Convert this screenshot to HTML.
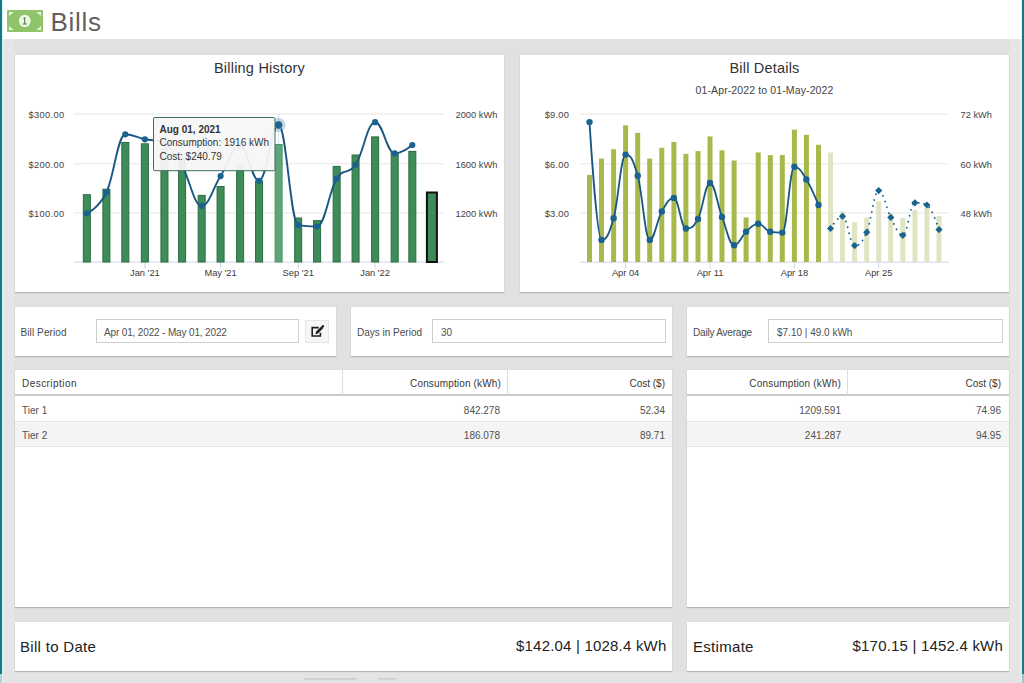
<!DOCTYPE html>
<html><head><meta charset="utf-8">
<style>
*{margin:0;padding:0;box-sizing:border-box}
html,body{width:1024px;height:683px;overflow:hidden}
body{background:#e1e1e1;position:relative;font-family:"Liberation Sans",sans-serif;color:#333}
.abs{position:absolute}
.stripe{position:absolute;top:0;height:674px;width:2px;background:#17788a}
.header{position:absolute;left:3px;top:0;width:1018px;height:39px;background:#fff}
.card{position:absolute;background:#fff;box-shadow:0 1px 1px rgba(0,0,0,0.2),0 0 1px rgba(0,0,0,0.05)}
.t{position:absolute;white-space:nowrap;line-height:1}
.inp{position:absolute;border:1px solid #cfcfcf;background:#fff;height:24px}
.lbl{font-size:10px;color:#4a4a4a}
.th{font-size:10px;color:#383838}
.td{font-size:10px;color:#505050}
svg text{font-family:"Liberation Sans",sans-serif}
</style></head><body>
<div class="abs" style="left:0;top:674px;width:2px;height:9px;background:#b5d3d6"></div>
<div class="abs" style="right:0;top:674px;width:2px;height:9px;background:#9cc6cc"></div>
<div class="stripe" style="left:0"></div>
<div class="stripe" style="right:0"></div>
<div class="abs" style="left:3px;top:39px;width:11px;height:644px;background:#e5e6e5"></div>
<div class="abs" style="left:1010px;top:39px;width:11px;height:644px;background:#e5e6e5"></div>
<div class="abs" style="left:2px;top:0;width:1px;height:683px;background:#dff3f3"></div>
<div class="abs" style="left:1021px;top:0;width:1px;height:683px;background:#dff3f3"></div>
<div class="header"></div>
<!-- icon -->
<svg class="abs" style="left:7px;top:10px" width="36" height="22" viewBox="0 0 36 22">
<rect x="0" y="0" width="36" height="22" rx="1" fill="#8fc46a"/>
<path d="M2 2h5l-5 4z M34 2h-5l5 4z M2 20h5l-5-4z M34 20h-5l5-4z" fill="#e4f5d4"/>
<ellipse cx="17.8" cy="11" rx="5.8" ry="6.2" fill="#eef9e6"/>
<path d="M16.3 8.2l2-1.4v6.8h1.6v1h-4.4v-1h1.6V8.8l-0.8 0.5z" fill="#5a7a4c"/>
</svg>
<div class="t" style="left:50.5px;top:8.5px;font-size:26px;letter-spacing:0.7px;color:#606060">Bills</div>

<div class="abs" style="left:3px;top:671px;width:1018px;height:12px;background:#e4e4e4"></div>
<div class="abs" style="left:304px;top:678px;width:53px;height:2px;border-radius:1px;background:#d0d0d0"></div>
<div class="abs" style="left:378px;top:678px;width:19px;height:2px;border-radius:1px;background:#d3d3d3"></div>
<!-- chart cards -->
<div class="card" style="left:14.5px;top:54.8px;width:489.5px;height:237.2px"></div>
<div class="card" style="left:519.8px;top:54.8px;width:489.5px;height:237.2px"></div>

<!-- row 2 -->
<div class="card" style="left:14.5px;top:307px;width:321.5px;height:49px"></div>
<div class="card" style="left:351px;top:307px;width:321px;height:49px"></div>
<div class="card" style="left:687px;top:307px;width:321.5px;height:49px"></div>

<!-- row 3 -->
<div class="card" style="left:14.5px;top:370px;width:657.5px;height:237px"></div>
<div class="card" style="left:687px;top:370px;width:321.5px;height:237px"></div>

<!-- row 4 -->
<div class="card" style="left:14.5px;top:622px;width:657.5px;height:48.5px"></div>
<div class="card" style="left:687px;top:622px;width:321.5px;height:48.5px"></div>

<svg class="abs" style="left:0;top:0" width="1024" height="683" viewBox="0 0 1024 683">
<line x1="74" y1="114" x2="444" y2="114" stroke="#e6e6e6" stroke-width="1"/>
<line x1="580" y1="114" x2="949" y2="114" stroke="#e6e6e6" stroke-width="1"/>
<line x1="74" y1="163.8" x2="444" y2="163.8" stroke="#e6e6e6" stroke-width="1"/>
<line x1="580" y1="163.8" x2="949" y2="163.8" stroke="#e6e6e6" stroke-width="1"/>
<line x1="74" y1="212.9" x2="444" y2="212.9" stroke="#e6e6e6" stroke-width="1"/>
<line x1="580" y1="212.9" x2="949" y2="212.9" stroke="#e6e6e6" stroke-width="1"/>
<line x1="74" y1="262" x2="444" y2="262" stroke="#ccd6eb" stroke-width="1"/>
<line x1="580" y1="262.2" x2="949" y2="262.2" stroke="#ccd6eb" stroke-width="1"/>
<line x1="144.9" y1="263" x2="144.9" y2="268.5" stroke="#ccd6eb" stroke-width="1"/>
<line x1="220.6" y1="263" x2="220.6" y2="268.5" stroke="#ccd6eb" stroke-width="1"/>
<line x1="298.2" y1="263" x2="298.2" y2="268.5" stroke="#ccd6eb" stroke-width="1"/>
<line x1="375.1" y1="263" x2="375.1" y2="268.5" stroke="#ccd6eb" stroke-width="1"/>
<line x1="625.6" y1="263" x2="625.6" y2="268.5" stroke="#ccd6eb" stroke-width="1"/>
<line x1="710.0" y1="263" x2="710.0" y2="268.5" stroke="#ccd6eb" stroke-width="1"/>
<line x1="794.4" y1="263" x2="794.4" y2="268.5" stroke="#ccd6eb" stroke-width="1"/>
<line x1="878.7" y1="263" x2="878.7" y2="268.5" stroke="#ccd6eb" stroke-width="1"/>
<line x1="278.6" y1="114" x2="278.6" y2="262" stroke="#ccd6eb" stroke-width="1" opacity="0.7"/>
<rect x="83.35" y="194.7" width="7.0" height="67.3" fill="#3e8d58" stroke="#2c6a43" stroke-width="1"/>
<rect x="102.90" y="189.2" width="7.0" height="72.8" fill="#3e8d58" stroke="#2c6a43" stroke-width="1"/>
<rect x="121.83" y="142.5" width="7.0" height="119.5" fill="#3e8d58" stroke="#2c6a43" stroke-width="1"/>
<rect x="141.38" y="143.8" width="7.0" height="118.2" fill="#3e8d58" stroke="#2c6a43" stroke-width="1"/>
<rect x="160.94" y="148.5" width="7.0" height="113.5" fill="#3e8d58" stroke="#2c6a43" stroke-width="1"/>
<rect x="178.60" y="158.5" width="7.0" height="103.5" fill="#3e8d58" stroke="#2c6a43" stroke-width="1"/>
<rect x="198.16" y="195.4" width="7.0" height="66.6" fill="#3e8d58" stroke="#2c6a43" stroke-width="1"/>
<rect x="217.08" y="186.5" width="7.0" height="75.5" fill="#3e8d58" stroke="#2c6a43" stroke-width="1"/>
<rect x="236.63" y="164.5" width="7.0" height="97.5" fill="#3e8d58" stroke="#2c6a43" stroke-width="1"/>
<rect x="255.56" y="180.9" width="7.0" height="81.1" fill="#3e8d58" stroke="#2c6a43" stroke-width="1"/>
<rect x="275.11" y="144.5" width="7.0" height="117.5" fill="#5ea577" stroke="#4a9465" stroke-width="1"/>
<rect x="294.67" y="218.0" width="7.0" height="44.0" fill="#3e8d58" stroke="#2c6a43" stroke-width="1"/>
<rect x="313.59" y="220.6" width="7.0" height="41.4" fill="#3e8d58" stroke="#2c6a43" stroke-width="1"/>
<rect x="333.15" y="166.4" width="7.0" height="95.6" fill="#3e8d58" stroke="#2c6a43" stroke-width="1"/>
<rect x="352.07" y="155.0" width="7.0" height="107.0" fill="#3e8d58" stroke="#2c6a43" stroke-width="1"/>
<rect x="371.63" y="136.9" width="7.0" height="125.1" fill="#3e8d58" stroke="#2c6a43" stroke-width="1"/>
<rect x="391.18" y="152.5" width="7.0" height="109.5" fill="#3e8d58" stroke="#2c6a43" stroke-width="1"/>
<rect x="408.84" y="151.4" width="7.0" height="110.6" fill="#3e8d58" stroke="#2c6a43" stroke-width="1"/>
<rect x="426.90" y="192.5" width="10.0" height="69.5" fill="#3e8a58" stroke="#111" stroke-width="2"/>
<path d="M86.85 213.30 C86.85 213.30 98.58 208.56 106.40 192.50 C113.97 176.96 117.76 134.30 125.33 134.30 C133.15 134.30 137.06 137.56 144.88 139.30 C152.71 141.04 156.62 139.30 164.44 143.00 C171.50 146.70 175.04 154.08 182.10 166.00 C189.92 179.20 193.83 205.80 201.66 205.80 C209.23 205.80 213.01 187.86 220.58 176.10 C228.40 163.94 232.31 146.00 240.13 146.00 C247.70 146.00 251.49 180.80 259.06 180.80 C266.88 180.80 270.79 125.00 278.61 125.00 C286.44 125.00 290.35 223.70 298.17 225.10 C305.74 226.50 309.52 226.50 317.09 226.50 C324.91 226.50 328.82 191.24 336.65 178.70 C344.22 166.56 348.00 175.91 355.57 164.80 C363.39 153.31 367.30 122.20 375.13 122.20 C382.95 122.20 386.86 153.40 394.68 153.40 C401.75 153.40 412.34 145.00 412.34 145.00" fill="none" stroke="#1a5783" stroke-width="1.9"/>
<circle cx="86.8" cy="213.3" r="3.1" fill="#1b6290"/>
<circle cx="106.4" cy="192.5" r="3.1" fill="#1b6290"/>
<circle cx="125.3" cy="134.3" r="3.1" fill="#1b6290"/>
<circle cx="144.9" cy="139.3" r="3.1" fill="#1b6290"/>
<circle cx="164.4" cy="143.0" r="3.1" fill="#1b6290"/>
<circle cx="182.1" cy="166.0" r="3.1" fill="#1b6290"/>
<circle cx="201.7" cy="205.8" r="3.1" fill="#1b6290"/>
<circle cx="220.6" cy="176.1" r="3.1" fill="#1b6290"/>
<circle cx="240.1" cy="146.0" r="3.1" fill="#1b6290"/>
<circle cx="259.1" cy="180.8" r="3.1" fill="#1b6290"/>
<circle cx="278.6" cy="125.0" r="7" fill="#1b6290" fill-opacity="0.25"/>
<circle cx="278.6" cy="125.0" r="4.2" fill="#1b6290" stroke="#fff" stroke-width="0.5"/>
<circle cx="298.2" cy="225.1" r="3.1" fill="#1b6290"/>
<circle cx="317.1" cy="226.5" r="3.1" fill="#1b6290"/>
<circle cx="336.6" cy="178.7" r="3.1" fill="#1b6290"/>
<circle cx="355.6" cy="164.8" r="3.1" fill="#1b6290"/>
<circle cx="375.1" cy="122.2" r="3.1" fill="#1b6290"/>
<circle cx="394.7" cy="153.4" r="3.1" fill="#1b6290"/>
<circle cx="412.3" cy="145.0" r="3.1" fill="#1b6290"/>
<rect x="587.0" y="174.9" width="5" height="87.1" fill="#a9b84a"/>
<rect x="599.0" y="158.6" width="5" height="103.4" fill="#a9b84a"/>
<rect x="611.1" y="149.2" width="5" height="112.8" fill="#a9b84a"/>
<rect x="623.1" y="125.3" width="5" height="136.7" fill="#a9b84a"/>
<rect x="635.2" y="132.9" width="5" height="129.1" fill="#a9b84a"/>
<rect x="647.2" y="158.6" width="5" height="103.4" fill="#a9b84a"/>
<rect x="659.3" y="147.8" width="5" height="114.2" fill="#a9b84a"/>
<rect x="671.4" y="141.9" width="5" height="120.1" fill="#a9b84a"/>
<rect x="683.4" y="153.8" width="5" height="108.2" fill="#a9b84a"/>
<rect x="695.5" y="151.1" width="5" height="110.9" fill="#a9b84a"/>
<rect x="707.5" y="136.4" width="5" height="125.6" fill="#a9b84a"/>
<rect x="719.5" y="150.3" width="5" height="111.7" fill="#a9b84a"/>
<rect x="731.6" y="160.5" width="5" height="101.5" fill="#a9b84a"/>
<rect x="743.6" y="217.4" width="5" height="44.6" fill="#a9b84a"/>
<rect x="755.7" y="152.4" width="5" height="109.6" fill="#a9b84a"/>
<rect x="767.8" y="155.1" width="5" height="106.9" fill="#a9b84a"/>
<rect x="779.8" y="155.1" width="5" height="106.9" fill="#a9b84a"/>
<rect x="791.9" y="129.7" width="5" height="132.3" fill="#a9b84a"/>
<rect x="803.9" y="134.8" width="5" height="127.2" fill="#a9b84a"/>
<rect x="816.0" y="144.8" width="5" height="117.2" fill="#a9b84a"/>
<rect x="828.0" y="152.4" width="5" height="109.6" fill="#dfe4c3"/>
<rect x="840.0" y="211.5" width="5" height="50.5" fill="#dfe4c3"/>
<rect x="852.1" y="222.3" width="5" height="39.7" fill="#dfe4c3"/>
<rect x="864.2" y="217.4" width="5" height="44.6" fill="#dfe4c3"/>
<rect x="876.2" y="201.2" width="5" height="60.8" fill="#dfe4c3"/>
<rect x="888.2" y="212.8" width="5" height="49.2" fill="#dfe4c3"/>
<rect x="900.3" y="218.2" width="5" height="43.8" fill="#dfe4c3"/>
<rect x="912.4" y="210.1" width="5" height="51.9" fill="#dfe4c3"/>
<rect x="924.4" y="207.9" width="5" height="54.1" fill="#dfe4c3"/>
<rect x="936.5" y="216.1" width="5" height="45.9" fill="#dfe4c3"/>
<path d="M589.50 122.10 C589.50 122.10 596.73 239.90 601.55 239.90 C606.37 239.90 608.78 235.26 613.60 218.20 C618.42 201.14 620.83 154.60 625.65 154.60 C630.47 154.60 632.88 158.64 637.70 175.70 C642.52 192.76 644.93 239.90 649.75 239.90 C654.57 239.90 656.98 219.90 661.80 211.50 C666.62 203.10 669.03 197.90 673.85 197.90 C678.67 197.90 681.08 228.50 685.90 228.50 C690.72 228.50 693.13 228.10 697.95 219.00 C702.77 209.90 705.18 183.00 710.00 183.00 C714.82 183.00 717.23 204.44 722.05 216.90 C726.87 229.36 729.28 245.30 734.10 245.30 C738.92 245.30 741.33 236.12 746.15 231.80 C750.97 227.48 753.38 223.70 758.20 223.70 C763.02 223.70 765.43 231.00 770.25 231.80 C775.07 232.60 777.48 232.60 782.30 232.60 C787.12 232.60 789.53 166.80 794.35 166.80 C799.17 166.80 801.58 171.86 806.40 179.50 C811.22 187.14 818.45 205.00 818.45 205.00" fill="none" stroke="#1a5783" stroke-width="1.8"/>
<circle cx="589.5" cy="122.1" r="3.2" fill="#1b6290"/>
<circle cx="601.5" cy="239.9" r="3.2" fill="#1b6290"/>
<circle cx="613.6" cy="218.2" r="3.2" fill="#1b6290"/>
<circle cx="625.6" cy="154.6" r="3.2" fill="#1b6290"/>
<circle cx="637.7" cy="175.7" r="3.2" fill="#1b6290"/>
<circle cx="649.8" cy="239.9" r="3.2" fill="#1b6290"/>
<circle cx="661.8" cy="211.5" r="3.2" fill="#1b6290"/>
<circle cx="673.9" cy="197.9" r="3.2" fill="#1b6290"/>
<circle cx="685.9" cy="228.5" r="3.2" fill="#1b6290"/>
<circle cx="698.0" cy="219.0" r="3.2" fill="#1b6290"/>
<circle cx="710.0" cy="183.0" r="3.2" fill="#1b6290"/>
<circle cx="722.0" cy="216.9" r="3.2" fill="#1b6290"/>
<circle cx="734.1" cy="245.3" r="3.2" fill="#1b6290"/>
<circle cx="746.1" cy="231.8" r="3.2" fill="#1b6290"/>
<circle cx="758.2" cy="223.7" r="3.2" fill="#1b6290"/>
<circle cx="770.2" cy="231.8" r="3.2" fill="#1b6290"/>
<circle cx="782.3" cy="232.6" r="3.2" fill="#1b6290"/>
<circle cx="794.4" cy="166.8" r="3.2" fill="#1b6290"/>
<circle cx="806.4" cy="179.5" r="3.2" fill="#1b6290"/>
<circle cx="818.5" cy="205.0" r="3.2" fill="#1b6290"/>
<path d="M830.50 228.50 C830.50 228.50 837.73 216.30 842.55 216.30 C847.37 216.30 849.78 245.60 854.60 245.60 C859.42 245.60 861.83 243.30 866.65 232.30 C871.47 221.30 873.88 190.60 878.70 190.60 C883.52 190.60 885.93 208.46 890.75 217.40 C895.57 226.34 897.98 235.30 902.80 235.30 C907.62 235.30 910.03 202.80 914.85 202.80 C919.67 202.80 922.08 202.80 926.90 205.00 C931.72 207.20 938.95 229.60 938.95 229.60" fill="none" stroke="#1b6290" stroke-width="1.9" stroke-dasharray="0.01 6" stroke-linecap="round"/>
<path d="M830.5 224.9l3.6 3.6l-3.6 3.6l-3.6 -3.6z" fill="#1b6290"/>
<path d="M842.5 212.7l3.6 3.6l-3.6 3.6l-3.6 -3.6z" fill="#1b6290"/>
<path d="M854.6 242.0l3.6 3.6l-3.6 3.6l-3.6 -3.6z" fill="#1b6290"/>
<path d="M866.7 228.7l3.6 3.6l-3.6 3.6l-3.6 -3.6z" fill="#1b6290"/>
<path d="M878.7 187.0l3.6 3.6l-3.6 3.6l-3.6 -3.6z" fill="#1b6290"/>
<path d="M890.8 213.8l3.6 3.6l-3.6 3.6l-3.6 -3.6z" fill="#1b6290"/>
<path d="M902.8 231.7l3.6 3.6l-3.6 3.6l-3.6 -3.6z" fill="#1b6290"/>
<path d="M914.9 199.2l3.6 3.6l-3.6 3.6l-3.6 -3.6z" fill="#1b6290"/>
<path d="M926.9 201.4l3.6 3.6l-3.6 3.6l-3.6 -3.6z" fill="#1b6290"/>
<path d="M939.0 226.0l3.6 3.6l-3.6 3.6l-3.6 -3.6z" fill="#1b6290"/>
<!-- titles -->
<text x="259.5" y="72.6" font-size="14.5" fill="#333" text-anchor="middle" letter-spacing="0.22">Billing History</text>
<text x="764.5" y="72.6" font-size="14.5" fill="#333" text-anchor="middle" letter-spacing="0.2">Bill Details</text>
<text x="764.5" y="93.8" font-size="10.5" fill="#444" text-anchor="middle" letter-spacing="0.12">01-Apr-2022 to 01-May-2022</text>
<!-- BH axis labels -->
<g font-size="9.3" fill="#444" text-anchor="end">
<text x="64.5" y="118" letter-spacing="0.35">$300.00</text>
<text x="64.5" y="167.5" letter-spacing="0.35">$200.00</text>
<text x="64.5" y="216.5" letter-spacing="0.35">$100.00</text>
<text x="569" y="118" letter-spacing="0.2">$9.00</text>
<text x="569" y="167.5" letter-spacing="0.2">$6.00</text>
<text x="569" y="216.5" letter-spacing="0.2">$3.00</text>
</g>
<g font-size="9.3" fill="#444" text-anchor="start">
<text x="455.5" y="118">2000 kWh</text>
<text x="455.5" y="167.5">1600 kWh</text>
<text x="455.5" y="216.5">1200 kWh</text>
<text x="960.5" y="118">72 kWh</text>
<text x="960.5" y="167.5">60 kWh</text>
<text x="960.5" y="216.5">48 kWh</text>
</g>
<g font-size="9.3" fill="#3a3a3a" text-anchor="middle">
<text x="144.9" y="275.8">Jan '21</text>
<text x="220.6" y="275.8">May '21</text>
<text x="298.2" y="275.8">Sep '21</text>
<text x="375.1" y="275.8">Jan '22</text>
<text x="625.6" y="275.8">Apr 04</text>
<text x="710.0" y="275.8">Apr 11</text>
<text x="794.4" y="275.8">Apr 18</text>
<text x="878.7" y="275.8">Apr 25</text>
</g>
<!-- tooltip -->
<rect x="153.5" y="117.5" width="121.5" height="53.2" rx="1.5" fill="#f7f7f7" fill-opacity="0.95" stroke="#3e6e62" stroke-width="1"/>
<g font-size="10" fill="#333">
<text x="159.5" y="133.4" font-weight="bold">Aug 01, 2021</text>
<text x="159.5" y="146.4">Consumption: 1916 kWh</text>
<text x="159.5" y="159.8">Cost: $240.79</text>
</g>
</svg>

<!-- row2 content -->
<div class="t lbl" style="left:20.5px;top:328px;letter-spacing:0.1px">Bill Period</div>
<div class="inp" style="left:96px;top:319px;width:203px"></div>
<div class="t td" style="left:104px;top:328px;letter-spacing:-0.15px">Apr 01, 2022 - May 01, 2022</div>
<div class="abs" style="left:305px;top:319.5px;width:24px;height:23.5px;background:#f6f6f6;border:1px solid #e6e6e6"></div>
<svg class="abs" style="left:311px;top:325px" width="14" height="13" viewBox="0 0 14 13">
<path d="M7.8 2.6H1.2V11h8.2V7.7" fill="none" stroke="#1e1e1e" stroke-width="1.6"/>
<path d="M4.3 9.2l0.9-2.6 5.6-5.6 1.8 1.8-5.6 5.6z" fill="#1e1e1e"/>
<circle cx="12" cy="1.2" r="1.1" fill="#1e1e1e"/>
</svg>
<div class="t lbl" style="left:357px;top:328px">Days in Period</div>
<div class="inp" style="left:432px;top:319px;width:234px"></div>
<div class="t td" style="left:441px;top:328px">30</div>
<div class="t lbl" style="left:693px;top:328px;letter-spacing:-0.2px">Daily Average</div>
<div class="inp" style="left:768px;top:319px;width:235px"></div>
<div class="t td" style="left:777px;top:328px">$7.10 | 49.0 kWh</div>

<!-- table left -->
<div class="abs" style="left:15px;top:394px;width:657px;height:2px;background:#c9c9c9"></div>
<div class="abs" style="left:342px;top:370px;width:1px;height:25px;background:#dcdcdc"></div>
<div class="abs" style="left:507px;top:370px;width:1px;height:25px;background:#dcdcdc"></div>
<div class="abs" style="left:15px;top:421px;width:657px;height:1px;background:#e6e6e6"></div>
<div class="abs" style="left:15px;top:422px;width:657px;height:24px;background:#f4f4f4"></div>
<div class="abs" style="left:15px;top:446px;width:657px;height:1px;background:#e6e6e6"></div>
<div class="t th" style="left:22px;top:379px;letter-spacing:0.45px">Description</div>
<div class="t th" style="right:523px;top:379px;letter-spacing:0.15px">Consumption (kWh)</div>
<div class="t th" style="right:359px;top:379px">Cost ($)</div>
<div class="t td" style="left:22px;top:405.5px">Tier 1</div>
<div class="t td" style="right:524px;top:405.5px">842.278</div>
<div class="t td" style="right:359px;top:405.5px">52.34</div>
<div class="t td" style="left:22px;top:430.5px">Tier 2</div>
<div class="t td" style="right:524px;top:430.5px">186.078</div>
<div class="t td" style="right:359px;top:430.5px">89.71</div>

<!-- table right -->
<div class="abs" style="left:687px;top:394px;width:321.5px;height:2px;background:#c9c9c9"></div>
<div class="abs" style="left:847px;top:370px;width:1px;height:25px;background:#dcdcdc"></div>
<div class="abs" style="left:687px;top:421px;width:322px;height:1px;background:#e6e6e6"></div>
<div class="abs" style="left:687px;top:422px;width:322px;height:24px;background:#f4f4f4"></div>
<div class="abs" style="left:687px;top:446px;width:322px;height:1px;background:#e6e6e6"></div>
<div class="t th" style="right:183px;top:379px;letter-spacing:0.2px">Consumption (kWh)</div>
<div class="t th" style="right:23px;top:379px">Cost ($)</div>
<div class="t td" style="right:183px;top:405.5px">1209.591</div>
<div class="t td" style="right:23px;top:405.5px">74.96</div>
<div class="t td" style="right:183px;top:430.5px">241.287</div>
<div class="t td" style="right:23px;top:430.5px">94.95</div>

<!-- totals -->
<div class="t" style="left:20px;top:638.5px;font-size:15px;letter-spacing:0.3px;color:#222">Bill to Date</div>
<div class="t" style="right:357.5px;top:638.2px;font-size:15px;letter-spacing:0.2px;color:#222">$142.04 | 1028.4 kWh</div>
<div class="t" style="left:693px;top:638.5px;font-size:15px;letter-spacing:0.3px;color:#222">Estimate</div>
<div class="t" style="right:21px;top:638.2px;font-size:15px;letter-spacing:0.2px;color:#222">$170.15 | 1452.4 kWh</div>
</body></html>
